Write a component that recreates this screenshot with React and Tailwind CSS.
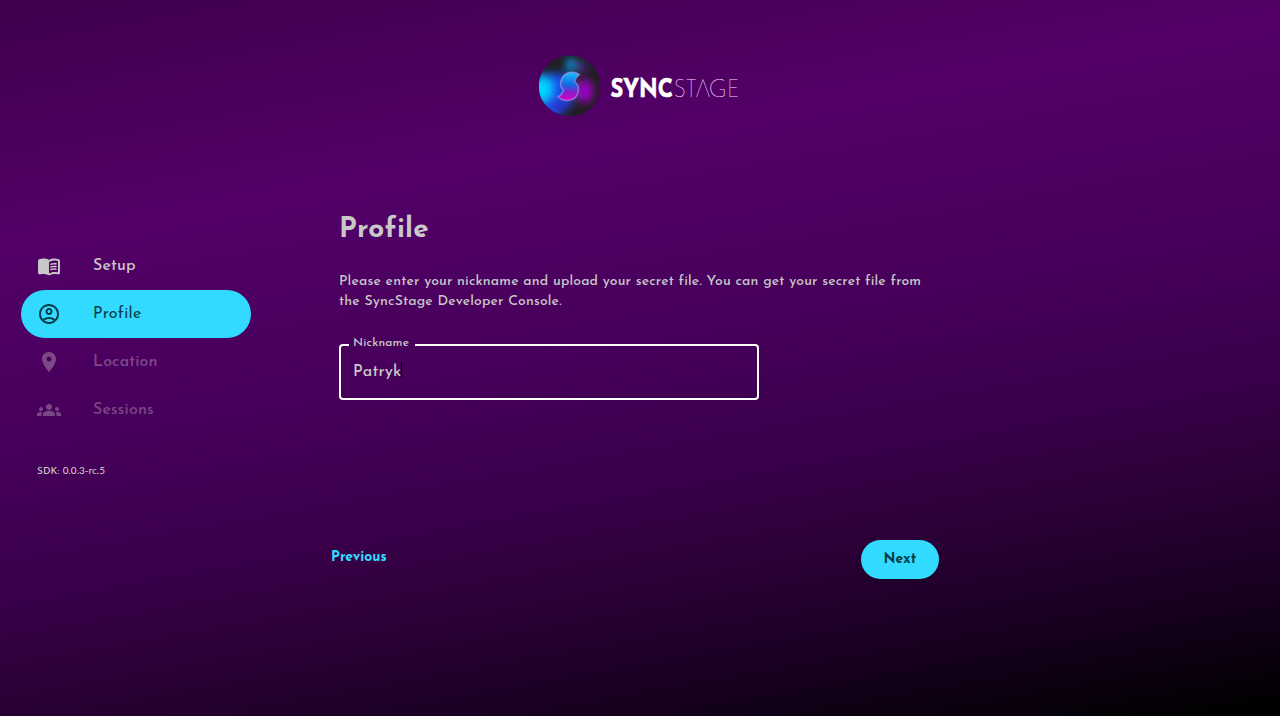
import React from "react";

const items = [
  { label: "Setup", state: "text-[#c8c8c8]", text: "font-medium tracking-[0.15px]", d: "M17.5 4.5c-1.95 0-4.05.4-5.5 1.5-1.45-1.1-3.55-1.5-5.5-1.5-1.45 0-2.99.22-4.28.79C1.49 5.62 1 6.33 1 7.14v11.28c0 1.3 1.22 2.26 2.48 1.94.98-.25 2.02-.36 3.02-.36 1.56 0 3.22.26 4.56.92.6.3 1.28.3 1.87 0 1.34-.67 3-.92 4.56-.92 1 0 2.04.11 3.02.36 1.26.33 2.48-.63 2.48-1.94V7.14c0-.81-.49-1.52-1.22-1.85-1.28-.57-2.82-.79-4.27-.79zM21 17.23c0 .63-.58 1.09-1.2.98-.75-.14-1.53-.2-2.3-.2-1.7 0-4.15.65-5.5 1.5V8c1.35-.85 3.8-1.5 5.5-1.5.92 0 1.83.09 2.7.28.46.1.8.51.8.98v9.47zM13.98 11.01c-.32 0-.61-.2-.71-.52-.13-.39.09-.82.48-.94 1.54-.5 3.53-.66 5.36-.45.41.05.71.42.66.83s-.42.71-.83.66c-1.62-.19-3.39-.04-4.73.39zM13.98 13.67c-.32 0-.61-.2-.71-.52-.13-.39.09-.82.48-.94 1.53-.5 3.53-.66 5.36-.45.41.05.71.42.66.83s-.42.71-.83.66c-1.62-.19-3.39-.04-4.73.39zM13.98 16.33c-.32 0-.61-.2-.71-.52-.13-.39.09-.82.48-.94 1.53-.5 3.53-.66 5.36-.45.41.05.71.42.66.83s-.42.7-.83.66c-1.62-.19-3.39-.04-4.73.39z" },
  { label: "Profile", state: "bg-[#31dafe] text-[#063c48]", text: "font-normal tracking-[0.3px]", d: "M12 2C6.48 2 2 6.48 2 12s4.48 10 10 10 10-4.48 10-10S17.52 2 12 2zM7.35 18.5C8.66 17.56 10.26 17 12 17s3.34.56 4.65 1.5c-1.31.94-2.91 1.5-4.65 1.5s-3.34-.56-4.65-1.5zm10.79-1.38C16.45 15.8 14.32 15 12 15s-4.45.8-6.14 2.12C4.7 15.73 4 13.95 4 12c0-4.42 3.58-8 8-8s8 3.58 8 8c0 1.95-.7 3.73-1.86 5.12zM12 6c-1.93 0-3.5 1.57-3.5 3.5S10.07 13 12 13s3.5-1.57 3.5-3.5S13.93 6 12 6zm0 5c-.83 0-1.5-.67-1.5-1.5S11.17 8 12 8s1.5.67 1.5 1.5S12.83 11 12 11z" },
  { label: "Location", state: "text-[#7d4a88]", text: "font-medium tracking-[0.15px]", d: "M12 2C8.13 2 5 5.13 5 9c0 5.25 7 13 7 13s7-7.75 7-13c0-3.87-3.13-7-7-7zm0 9.5c-1.38 0-2.5-1.12-2.5-2.5s1.12-2.5 2.5-2.5 2.5 1.12 2.5 2.5-1.12 2.5-2.5 2.5z" },
  { label: "Sessions", state: "text-[#7a4785]", text: "font-medium tracking-[0.15px]", d: "M12 12.75c1.63 0 3.07.39 4.24.9 1.08.48 1.76 1.56 1.76 2.73V18H6v-1.61c0-1.18.68-2.26 1.76-2.73 1.17-.52 2.61-.91 4.24-.91zM4 13c1.1 0 2-.9 2-2s-.9-2-2-2-2 .9-2 2 .9 2 2 2zm1.13 1.1C4.76 14.04 4.39 14 4 14c-.99 0-1.93.21-2.78.58C.48 14.9 0 15.62 0 16.43V18h4.5v-1.61c0-.83.23-1.61.63-2.29zM20 13c1.1 0 2-.9 2-2s-.9-2-2-2-2 .9-2 2 .9 2 2 2zm4 3.43c0-.81-.48-1.53-1.22-1.85-.85-.37-1.79-.58-2.78-.58-.39 0-.76.04-1.13.1.4.68.63 1.46.63 2.29V18H24v-1.57zM12 6c1.66 0 3 1.34 3 3s-1.34 3-3 3-3-1.34-3-3 1.34-3 3-3z" },
];

function Logo() {
  return (
    <svg width="210" height="64" viewBox="0 0 210 64" className="block">
      <defs>
        <clipPath id="disc"><path d="M31 1.500C49 .5 62 15.500 62 32S50 62 33 62C17 63 1 50 1 34 0 16 14 2.500 31 1.500z" /></clipPath>
        <filter id="soft" x="-60%" y="-60%" width="220%" height="220%"><feGaussianBlur stdDeviation="4" /></filter>
        <linearGradient id="mark" x1="0" y1="0" x2="0" y2="1">
          <stop offset="0" stopColor="#12c0ff" /><stop offset=".45" stopColor="#1668e4" /><stop offset=".7" stopColor="#8520c8" /><stop offset="1" stopColor="#d800c4" />
        </linearGradient>
      </defs>
      <g clipPath="url(#disc)">
        <rect width="64" height="64" fill="#211e20" />
        <g filter="url(#soft)">
          <path d="M-8 20L12 19L27 20L36 28L36 44L29 54L12 70L-8 66z" fill="#1550ea" />
          <ellipse cx="22" cy="52" rx="11" ry="6" fill="#2c30c8" />
          <ellipse cx="3" cy="35" rx="11" ry="12" fill="#00d6ff" />
          <ellipse cx="47" cy="37" rx="8" ry="12" fill="#a000cc" />
          <ellipse cx="33" cy="11" rx="5" ry="7" fill="#0a98f0" />
          <ellipse cx="45" cy="13" rx="5" ry="5" fill="#4a1fa0" />
        </g>
      </g>
      <path d="M41.500 20.500C36 16.500 27 18 24 24C21.500 28.500 22.500 33 25.500 36C24 40 22 42 20 42.500C25 48 35.500 48 39 41C41.500 35 40 30 36.500 27.500C37.500 24 39 22.500 41.500 20.500z" fill="url(#mark)" stroke="#bb9ae6" strokeOpacity=".6" strokeWidth="1.500" />
      <g fontFamily="'Josefin Sans', Lato, sans-serif" fontSize="25.5">
        <text x="72.500" y="43" fontWeight="700" fill="#fff" stroke="#fff" strokeWidth=".7" textLength="62.500" lengthAdjust="spacingAndGlyphs">SYNC</text>
        <g fontWeight="100" fill="#f0dcf5" stroke="#d3a8dc" strokeWidth=".2">
          <text x="136" y="43" textLength="11.500" lengthAdjust="spacingAndGlyphs">S</text>
          <text x="147.500" y="43" textLength="11.500" lengthAdjust="spacingAndGlyphs">T</text>
          <text x="170.500" y="43" textLength="18.500" lengthAdjust="spacingAndGlyphs">G</text>
          <text x="189.500" y="43" textLength="11.500" lengthAdjust="spacingAndGlyphs">E</text>
        </g>
      </g>
      <path d="M158.500 43L165 25.500L171.500 43" fill="none" stroke="#c193cd" strokeWidth=".9" />
    </svg>
  );
}

export default function App() {
  return (
    <div className="flex h-[716px] w-[1280px] flex-col overflow-hidden bg-[linear-gradient(170deg,#3f004c_0%,#530068_26%,#450059_50%,#390049_64%,#280033_76%,#16001d_87%,#000000_99%)] font-['Josefin_Sans',Lato,sans-serif] text-[#c8c8c8]">
      <header className="flex h-[205px] pt-[54px] pl-[538px]">
        <Logo />
      </header>
      <main className="flex flex-1">
        <aside className="w-[331px] pt-[37px] pl-[21px]">
          <nav>
            {items.map((it) => (
              <a key={it.label} className={"flex h-12 w-[230px] items-center rounded-full pl-4 " + it.state}>
                <svg width="24" height="24" viewBox="0 0 24 24" fill="currentColor"><path d={it.d} /></svg>
                <span className={"ml-8 text-base " + it.text}>{it.label}</span>
              </a>
            ))}
          </nav>
          <p className="mt-7 ml-4 text-[10px] leading-4 font-medium tracking-[0.1px]">
            SDK: <span className="font-[Lato] tracking-normal">0.0.3-rc.5</span>
          </p>
        </aside>
        <section className="w-[608px]">
          <div className="h-[335px] pt-[5px] pl-2">
            <h1 className="text-[28px] leading-10 font-bold tracking-[0.25px]">Profile</h1>
            <p className="mt-[22px] text-sm leading-5 font-medium tracking-[0.17px] whitespace-nowrap">
              Please enter your nickname and upload your secret file. You can get your secret file from
              <br />
              the SyncStage Developer Console.
            </p>
            <fieldset className="mt-[25px] h-[63px] w-[420px] rounded border-2 border-white pl-3">
              <legend className="-ml-1 h-4 w-[66px] pl-1 text-xs leading-3 font-medium tracking-[0.15px]">Nickname</legend>
              <div className="flex items-center pt-[7px] text-base leading-6 font-medium tracking-[0.15px]">
                Patryk
                <span className="-mt-1 h-4 w-px bg-black" />
              </div>
            </fieldset>
          </div>
          <div className="flex items-start justify-between">
            <button className="pt-[8px] text-sm leading-5 font-bold text-[#31dafe]">Previous</button>
            <button className="flex h-[39px] w-[78px] justify-center rounded-full bg-[#31dafe] pt-[10px] text-sm leading-5 font-bold tracking-[0.15px] text-[#063c48] shadow-md">
              Next
            </button>
          </div>
        </section>
      </main>
    </div>
  );
}
